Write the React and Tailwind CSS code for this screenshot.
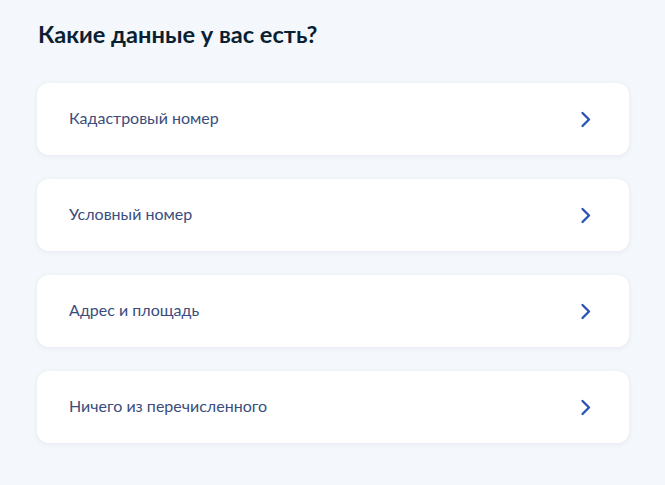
import React from 'react';

const options = ['Кадастровый номер', 'Условный номер', 'Адрес и площадь', 'Ничего из перечисленного'];

const Chevron = () => (
    <svg width="12" height="17" viewBox="0 0 12 17" fill="none">
        <path d="M2.5 2 L9 8.5 L2.5 15" stroke="#2a55b0" strokeWidth="2.4" strokeLinecap="round" strokeLinejoin="round" />
    </svg>
);

const App = () => {
    return (
        <div className="min-h-[485px] bg-[#f4f7fb] px-[37px] pt-[20px] pb-10" style={{ fontFamily: 'Lato, "Noto Sans", sans-serif' }}>
            <h1 className="text-[23.6px] leading-[28px] font-bold text-[#0b1f33] mb-[35px] ml-[1px]">Какие данные у вас есть?</h1>
            <div className="flex flex-col gap-[24px] w-[592px]">
                {options.map(item => (
                    <button
                        key={item}
                        className="h-[72px] bg-white rounded-[12px] shadow-[0_1px_4px_rgba(180,195,215,0.25)] flex items-center justify-between pl-[32px] pr-[37px] text-left"
                    >
                        <span className="text-[16px] leading-[20px] text-[#3a4d7d] -mt-[2px]">{item}</span>
                        <Chevron />
                    </button>
                ))}
            </div>
        </div>
    );
};

export default App;
